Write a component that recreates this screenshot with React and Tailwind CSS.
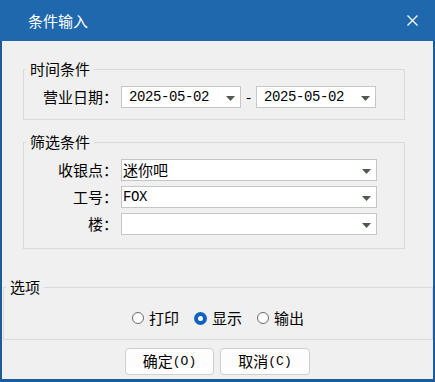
import React from "react";

const cjk = "font-['Noto_Sans_CJK_SC',sans-serif]";
const mono = "font-['Liberation_Mono','Noto_Sans_CJK_SC',monospace]";

function Arrow() {
  return (
    <svg className="ml-auto mr-[5px] mt-[2px] shrink-0" width="9" height="5" viewBox="0 0 9 5">
      <path d="M0 0H9L4.5 5Z" fill="#4e5a4f" />
    </svg>
  );
}

function Combo({ children, className = "" }) {
  return (
    <div className={`flex h-[22px] items-center border border-[#c6c6c6] bg-white ${className}`}>
      {children}
      <Arrow />
    </div>
  );
}

function Radio({ label, checked = false }) {
  return (
    <label className="flex items-center gap-[5px]">
      {checked ? (
        <span className="flex h-[13px] w-[13px] items-center justify-center rounded-full bg-[#0f63c0]">
          <span className="h-[5px] w-[5px] rounded-full bg-white" />
        </span>
      ) : (
        <span className="h-[12px] w-[12px] rounded-full border border-[#6a6a6a] bg-white" />
      )}
      <span className="leading-[20px]">{label}</span>
    </label>
  );
}

function Legend({ children }) {
  return <legend className="ml-[2px] px-[4px] leading-[20px] text-[15px] text-black">{children}</legend>;
}

export default function App() {
  return (
    <div className={`flex h-[382px] w-[435px] flex-col bg-[#1c5c9a] text-[15px] text-black ${cjk}`}>
      <div className="flex h-[41px] shrink-0 items-center bg-[#2068ae] pl-[28px] pr-[17px] text-white">
        <span className="text-[15px] leading-[20px]">条件输入</span>
        <svg className="ml-auto" width="11" height="11" viewBox="0 0 11 11">
          <path d="M0.5 0.5L10.5 10.5M10.5 0.5L0.5 10.5" stroke="#ffffff" strokeWidth="1.3" />
        </svg>
      </div>

      <div className="mx-[2px] mb-[3px] flex flex-1 flex-col bg-[#f0f0f0]">
        <fieldset className="ml-[21px] mt-[18px] w-[382px] border border-[#dadada] pb-[11px] pt-[7px]">
          <Legend>时间条件</Legend>
          <div className="flex items-center">
            <span className="w-[94px] text-right leading-[20px]">营业日期：</span>
            <Combo className="ml-[3px] w-[120px]">
              <span className={`pl-[7px] text-[14px] tracking-[-0.4px] ${mono}`}>2025-05-02</span>
            </Combo>
            <span className="w-[15px] text-center leading-[20px]">-</span>
            <Combo className="w-[120px]">
              <span className={`pl-[7px] text-[14px] tracking-[-0.4px] ${mono}`}>2025-05-02</span>
            </Combo>
          </div>
        </fieldset>

        <fieldset className="ml-[21px] mt-[12px] w-[382px] border border-[#dadada] pb-[13px] pt-[7px]">
          <Legend>筛选条件</Legend>
          <div className="grid grid-cols-[94px_256px] items-center gap-x-[3px] gap-y-[5px]">
            <span className="text-right leading-[20px]">收银点：</span>
            <Combo>
              <span className="pl-[1px] leading-[20px]">迷你吧</span>
            </Combo>
            <span className="text-right leading-[20px]">工号：</span>
            <Combo>
              <span className={`pl-[1px] text-[14px] tracking-[-0.4px] ${mono}`}>FOX</span>
            </Combo>
            <span className="text-right leading-[20px]">楼：</span>
            <Combo />
          </div>
        </fieldset>

        <fieldset className="ml-[1px] mt-[28px] w-[430px] border border-[#dadada] pb-[11px] pt-[11px]">
          <Legend>选项</Legend>
          <div className="flex justify-center gap-[15px]">
            <Radio label="打印" />
            <Radio label="显示" checked />
            <Radio label="输出" />
          </div>
        </fieldset>

        <div className="mt-[8px] flex justify-center gap-[6px]">
          <button className="flex h-[27px] w-[89px] items-center justify-center rounded-[4px] border border-[#cfcfcf] bg-[#fdfdfd]">
            <span>确定</span>
            <span className={`text-[13px] ${mono}`}>(O)</span>
          </button>
          <button className="flex h-[27px] w-[90px] items-center justify-center rounded-[4px] border border-[#cfcfcf] bg-[#fdfdfd]">
            <span>取消</span>
            <span className={`text-[13px] ${mono}`}>(C)</span>
          </button>
        </div>
      </div>
    </div>
  );
}
